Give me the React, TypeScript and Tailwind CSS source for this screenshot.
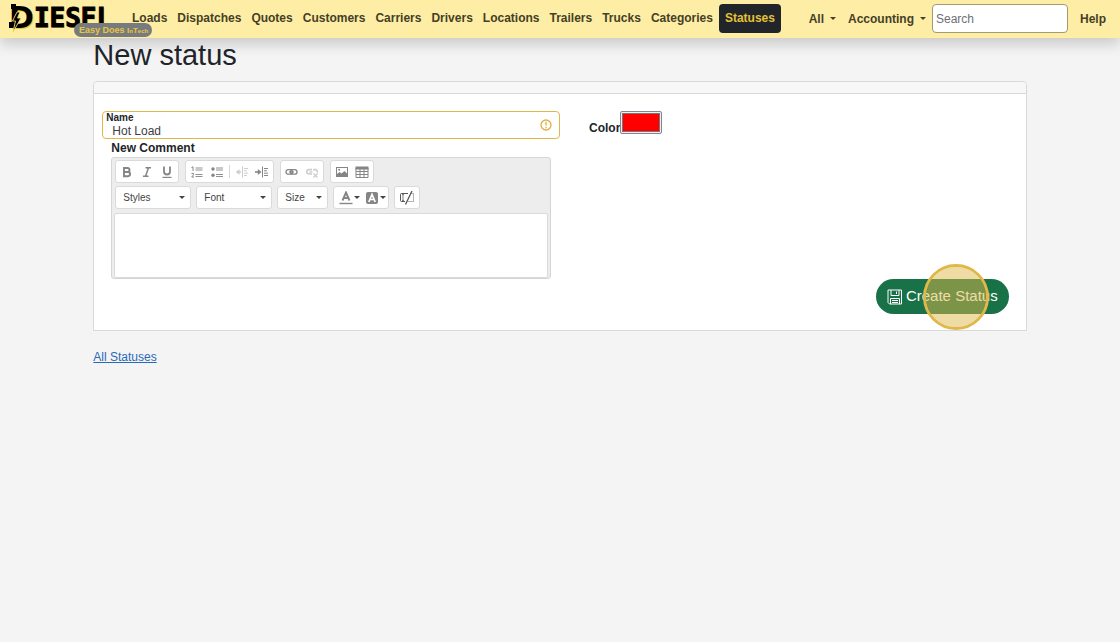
import type { ReactNode } from "react";

const links = [
  "Loads",
  "Dispatches",
  "Quotes",
  "Customers",
  "Carriers",
  "Drivers",
  "Locations",
  "Trailers",
  "Trucks",
  "Categories",
];

const Caret = () => (
  <svg viewBox="0 0 6 3" className="w-[6px] h-[3px] shrink-0 pointer-events-none" aria-hidden="true">
    <path d="M0 0h6L3 3z" fill="currentColor" />
  </svg>
);

const Logo = () => (
  <a
    href="#"
    className="relative flex w-[127px] h-full shrink-0 pl-[9px] font-bold text-black [text-shadow:1px_1px_0_#eac52b]"
  >
    <span className="font-['DejaVu_Sans',sans-serif] text-[30px] leading-[35px]">D</span>
    <span className="font-['DejaVu_Sans_Mono',monospace] text-[26px] leading-[37px] [-webkit-text-stroke:1px_black]">
      IESEL
    </span>
    {/* lightning bolt through the D */}
    <svg viewBox="0 0 14 30" className="absolute left-[8px] top-[3px] w-[14px] h-[30px]" aria-hidden="true">
      <path d="M1 19h4v6H1z" fill="#000" />
      <path d="M3 1h5v5H3z" fill="#000" />
      <path d="M9 9 4.500 18h3L5 29l8-14H9.500L12 9z" fill="#000" stroke="#f6dc6a" strokeWidth="0.900" />
    </svg>
    <span className="absolute left-[74px] top-[23px] h-[14px] pl-[5px] pr-[4px] rounded-full bg-[#777b7e] text-[#e9c63f] text-[8px] leading-[14px] whitespace-nowrap [text-shadow:none]">
      <span className="text-[9px]">Easy Does </span>I<span className="text-[6px]">n</span>T
      <span className="text-[6px]">ech</span>
    </span>
  </a>
);

const Navbar = () => (
  <nav className="relative flex items-center h-[38px] pb-px pr-2 bg-[#feeda4] text-[#443f27] text-[12px] font-bold shadow-[0_6px_14px_rgba(0,0,0,0.18)]">
    <Logo />
    <ul className="flex items-center">
      {links.map((link) => (
        <li key={link}>
          <a href="#" className="block px-[5px] leading-[29px]">
            {link}
          </a>
        </li>
      ))}
      <li>
        <a href="#" className="block ml-px px-[6px] leading-[29px] rounded bg-[#212529] text-[#e5c236]" aria-current="page">
          Statuses
        </a>
      </li>
    </ul>
    <div className="flex items-center ml-auto">
      <button type="button" className="flex items-center gap-[6px] px-[6px]">
        All <Caret />
      </button>
      <button type="button" className="flex items-center gap-[6px] px-[6px]">
        Accounting <Caret />
      </button>
      <input
        type="search"
        placeholder="Search"
        aria-label="Search"
        className="w-[136px] h-[29px] px-[3px] rounded border border-[#a19a72] bg-white font-normal placeholder:text-[#6c7074]"
      />
      <a href="#" className="ml-[6px] px-[6px]">
        Help
      </a>
    </div>
  </nav>
);

const Group = ({ children }: { children: ReactNode }) => (
  <div className="flex items-center h-[23px] px-px rounded-[3px] border border-[#dadada] bg-white text-[#858585]">
    {children}
  </div>
);

const Tool = ({ label, off, children }: { label: string; off?: boolean; children: ReactNode }) => (
  <button
    type="button"
    aria-label={label}
    disabled={off}
    className="flex items-center justify-center w-[20px] h-[20px] disabled:opacity-40"
  >
    <svg viewBox="0 0 14 14" className="w-[14px] h-[14px]" fill="none" stroke="currentColor">
      {children}
    </svg>
  </button>
);

const Combo = ({ label, width }: { label: string; width: string }) => (
  <div
    className={`flex items-center h-[23px] pl-[7px] pr-[5px] rounded-[3px] border border-[#dadada] bg-white text-[#444] ${width}`}
  >
    <select aria-label={label} className="flex-1 min-w-0 appearance-none text-[10px] outline-none">
      <option>{label}</option>
    </select>
    <Caret />
  </div>
);

const Editor = () => (
  <div className="px-[2px] pt-[2px] rounded-[3px] border border-[#d5d5d5] bg-[#ededed]">
    <div className="flex flex-wrap gap-x-[6px] px-px" role="toolbar" aria-label="Formatting">
      <Group>
        <Tool label="Bold">
          <path d="M4 3h3.500a2 2 0 0 1 0 4H4zM4 7h4a2.100 2.100 0 0 1 0 4.200H4z" strokeWidth="1.900" />
        </Tool>
        <Tool label="Italic">
          <path d="M5.500 2.800H11M3 11.300h5.500M8.400 3 5.600 11" strokeWidth="1.500" />
        </Tool>
        <Tool label="Underline">
          <path d="M4 1.500v5a3 3 0 0 0 6 0v-5" strokeWidth="1.800" />
          <path d="M2.500 12.400h9" strokeWidth="1.200" />
        </Tool>
      </Group>
      <Group>
        <Tool label="Numbered list">
          <path d="M1.500 2.500 3 1.800V6M1.500 8.500h2v1.300L1.700 12H4" strokeWidth="1" />
          <path d="M5.500 3h7M5.500 5h7M5.500 9.500h7M5.500 11.500h7" strokeWidth="0.900" />
        </Tool>
        <Tool label="Bulleted list">
          <circle cx="3" cy="4" r="1.700" fill="currentColor" stroke="none" />
          <circle cx="3" cy="10.300" r="1.700" fill="currentColor" stroke="none" />
          <path d="M6 3h7M6 5h7M6 9.500h7M6 11.500h7" strokeWidth="0.900" />
        </Tool>
        <span className="w-px h-[13px] mx-[2px] bg-[#d8d8d8]" />
        <Tool label="Decrease indent" off>
          <path d="M1.500 7H6" strokeWidth="1.600" />
          <path d="M4.500 4v6L1 7z" fill="currentColor" stroke="none" />
          <path d="M7.500 1.500v11M9 3.500h4M9 5.800h3M9 8.200h4M9 10.500h3" strokeWidth="1" />
        </Tool>
        <Tool label="Increase indent">
          <path d="M0 7h4" strokeWidth="1.600" />
          <path d="M2.800 4v6L6.500 7z" fill="currentColor" stroke="none" />
          <path d="M7.500 1.500v11M9 3.500h4M9 5.800h3M9 8.200h4M9 10.500h4" strokeWidth="1" />
        </Tool>
      </Group>
      <Group>
        <Tool label="Link">
          <rect x="1" y="4.600" width="6.500" height="4.600" rx="2.300" strokeWidth="1.300" />
          <rect x="5.500" y="4.600" width="6.500" height="4.600" rx="2.300" strokeWidth="1.300" />
          <path d="M4 7h5" strokeWidth="1.200" />
        </Tool>
        <Tool label="Unlink" off>
          <path d="M7 9H4a2.200 2.200 0 0 1 0-4.400h3M8 4.600h2.200a2.200 2.200 0 0 1 2 3M4.500 7h3" strokeWidth="1.600" />
          <path d="m8.500 8.500 4 4M12.500 8.500l-4 4" strokeWidth="1.300" />
        </Tool>
      </Group>
      <Group>
        <Tool label="Image">
          <rect x="1.500" y="2.500" width="11" height="9" strokeWidth="1" />
          <path d="M2 11V9l2.500-2 2 1.500L9.500 6 12 8.500V11z" fill="currentColor" stroke="none" />
          <circle cx="4.200" cy="4.800" r="1" fill="currentColor" stroke="none" />
        </Tool>
        <Tool label="Table">
          <path d="M.5 1.500h13v3H.5z" fill="currentColor" stroke="none" />
          <path d="M1 3v9.500h12V3M1 6.500h12M1 9.500h12M5 4v8.500M9 4v8.500" strokeWidth="1" />
        </Tool>
      </Group>
    </div>
    <div className="flex flex-wrap gap-x-[5px] mt-[3px] px-px">
      <Combo label="Styles" width="w-[76px]" />
      <Combo label="Font" width="w-[76px]" />
      <Combo label="Size" width="w-[51px]" />
      <Group>
        <button type="button" aria-label="Text color" className="flex items-center w-[26px] pl-[4px] gap-px">
          <svg viewBox="0 0 14 14" className="w-[14px] h-[14px]" fill="none" stroke="currentColor">
            <path d="M3.500 9.500 7 1.500l3.500 8M5 7h4" strokeWidth="1.900" />
            <path d="M.5 12.500h13" strokeWidth="1.400" />
          </svg>
          <span className="text-[#444]">
            <Caret />
          </span>
        </button>
        <button type="button" aria-label="Background color" className="flex items-center w-[26px] pl-[4px] gap-px">
          <svg viewBox="0 0 14 14" className="w-[14px] h-[14px]" fill="none">
            <rect x="1" y="1" width="12" height="12" rx="2" fill="currentColor" />
            <path d="M3.800 11 7 3.500l3.200 7.500M5 8.500h4" stroke="#fff" strokeWidth="1.700" />
          </svg>
          <span className="text-[#444]">
            <Caret />
          </span>
        </button>
      </Group>
      <Group>
        <span className="flex px-px text-[#555]">
          <Tool label="Remove placeholder">
            <path d="M8 2.500H1.500a1 1 0 0 0-1 1v6a1 1 0 0 0 1 1H5" strokeWidth="1" />
            <path d="M3 4v5M2 3.500h2M2 9.500h2" strokeWidth="0.800" />
            <path d="M12 0 5.500 13.500" strokeWidth="1.300" />
            <path d="M11.500 2.500h2v8H8" strokeWidth="0.900" strokeDasharray="1 1" />
          </Tool>
        </span>
      </Group>
    </div>
    <textarea
      id="comment"
      className="block w-full h-[65px] mt-[4px] p-1 resize-none rounded-[2px] border border-[#dadada] bg-white outline-none"
    />
  </div>
);

const App = () => {
  return (
    <div className="min-h-screen bg-[#f4f4f4] font-['Liberation_Sans',Arial,sans-serif] text-[12px] text-[#212529]">
      <Navbar />

      <main className="w-5/6 mx-auto">
        <h1 className="text-[29px] leading-[35px] mb-2">New status</h1>

        <form className="rounded-t border border-[#d9d9d9] bg-white">
          <div className="h-[12px] rounded-t border-b border-[#d9d9d9] bg-[#f7f7f7]" />

          <div className="grid grid-cols-2 pt-[17px]">
            <div className="pl-2">
              <div className="flex items-center h-[28px] pr-[7px] rounded border border-[#e0b84a]">
                <div className="flex flex-col flex-1">
                  <label htmlFor="name" className="pl-[3px] text-[10px] leading-[11px] font-bold">
                    Name
                  </label>
                  <input
                    id="name"
                    type="text"
                    defaultValue="Hot Load"
                    className="pl-[9px] h-[16px] outline-none text-[#3c4045]"
                  />
                </div>
                <svg viewBox="0 0 12 12" className="w-[12px] h-[12px]" fill="none" stroke="#e0b040" aria-hidden="true">
                  <circle cx="6" cy="6" r="5" strokeWidth="1.300" />
                  <path d="M6 2.800v3.800M6 7.800v1.400" strokeWidth="1.300" />
                </svg>
              </div>
              <div className="mx-[9px]">
                <label htmlFor="comment" className="block leading-[18px] font-bold">
                  New Comment
                </label>
                <Editor />
              </div>
            </div>

            <div className="flex items-start pl-[29px]">
              <label htmlFor="color" className="pt-[8px] leading-[18px] font-bold">
                Color
              </label>
              <input
                id="color"
                type="color"
                defaultValue="#ff0000"
                className="w-[42px] h-[23px] p-px rounded-[2px] border border-[#85858f] bg-[#efefef] [&::-webkit-color-swatch-wrapper]:p-0 [&::-webkit-color-swatch]:border-[#777]"
              />
            </div>
          </div>

          <div className="flex justify-end pr-[17px] pb-4">
            <div className="relative">
              <button
                type="button"
                className="flex items-center gap-[3px] h-[35px] px-[11px] rounded-full bg-[#187147] text-[15px] text-white"
              >
                <svg viewBox="0 0 16 16" className="w-[16px] h-[16px]" fill="none" stroke="currentColor" aria-hidden="true">
                  <path d="M1.500 1h13v14h-12L1 13.500V1z" />
                  <path d="M4 1v5.500h8V1M9.500 2.500v2.500M3.500 15V9.500h9V15M5 11.500h6M5 13.500h6" />
                </svg>
                Create Status
              </button>
              {/* Click highlight */}
              <span className="absolute left-[47px] -top-[15px] w-[66px] h-[66px] rounded-full border-[3px] border-[#e0b84a] bg-[#e0b84a]/50 bg-clip-padding pointer-events-none" />
            </div>
          </div>
        </form>

        <a href="#" className="inline-block mt-[17px] leading-[18px] text-[#2a69b8] underline">
          All Statuses
        </a>
      </main>
    </div>
  );
};

export default App;
